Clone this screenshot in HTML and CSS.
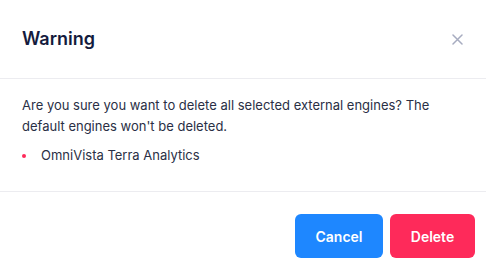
FILE: index.html
```html
<!DOCTYPE html>
<html>
<head>
<meta charset="utf-8">
<link rel="stylesheet" href="styles.css">
</head>
<body>
<div class="modal">
  <div class="modal-header">
    <h2 class="modal-title">Warning</h2>
    <button class="close-btn" aria-label="Close">
      <svg width="11" height="11" viewBox="0 0 11 11"><path d="M1 1L10 10M10 1L1 10" stroke="#a7acc0" stroke-width="1.5" stroke-linecap="round"/></svg>
    </button>
  </div>
  <div class="modal-body">
    <p class="message">Are you sure you want to delete all selected external engines? The default engines won't be deleted.</p>
    <ul class="engine-list">
      <li>OmniVista Terra Analytics</li>
    </ul>
  </div>
  <div class="modal-footer">
    <button class="btn btn-cancel">Cancel</button>
    <button class="btn btn-delete">Delete</button>
  </div>
</div>
</body>
</html>
```
FILE: styles.css
```css
html, body {
  margin: 0;
  padding: 0;
  background: #ffffff;
}
body {
  font-family: Inter, "Noto Sans", sans-serif;
  color: #2a2f45;
}
.modal {
  width: 486px;
}
.modal-header {
  height: 79px;
  box-sizing: border-box;
  display: flex;
  align-items: center;
  justify-content: space-between;
  padding: 0 23px 0 22px;
  border-bottom: 1px solid #ececf0;
}
.modal-title {
  margin: 0;
  font-size: 18px;
  font-weight: 600;
  color: #141b3d;
  line-height: 22px;
}
.close-btn {
  border: 0;
  background: none;
  padding: 0;
  width: 11px;
  height: 11px;
  display: flex;
  margin-top: 0;
}
.modal-body {
  padding: 16px 22px 19px 22px;
  border-bottom: 1px solid #ececf0;
  height: 113px;
  box-sizing: border-box;
}
.message {
  margin: 0;
  font-size: 13px;
  line-height: 21px;
}
.engine-list {
  margin: 8px 0 0 0;
  padding: 0;
  list-style: none;
}
.engine-list li {
  font-size: 13px;
  line-height: 21px;
  display: flex;
  align-items: center;
  gap: 15px;
}
.engine-list li::before {
  content: "";
  width: 4px;
  height: 4px;
  border-radius: 50%;
  background: #fe2a5a;
}
.modal-footer {
  display: flex;
  justify-content: flex-end;
  gap: 7px;
  padding: 22px 11px 0 0;
}
.btn {
  border: 0;
  height: 44px;
  border-radius: 6px;
  color: #ffffff;
  font-family: Inter, "Noto Sans", sans-serif;
  font-size: 14px;
  font-weight: 600;
  padding: 0;
}
.btn-cancel {
  width: 88px;
  background: #1e87ff;
}
.btn-delete {
  width: 85px;
  background: #fe2a5a;
}
```
